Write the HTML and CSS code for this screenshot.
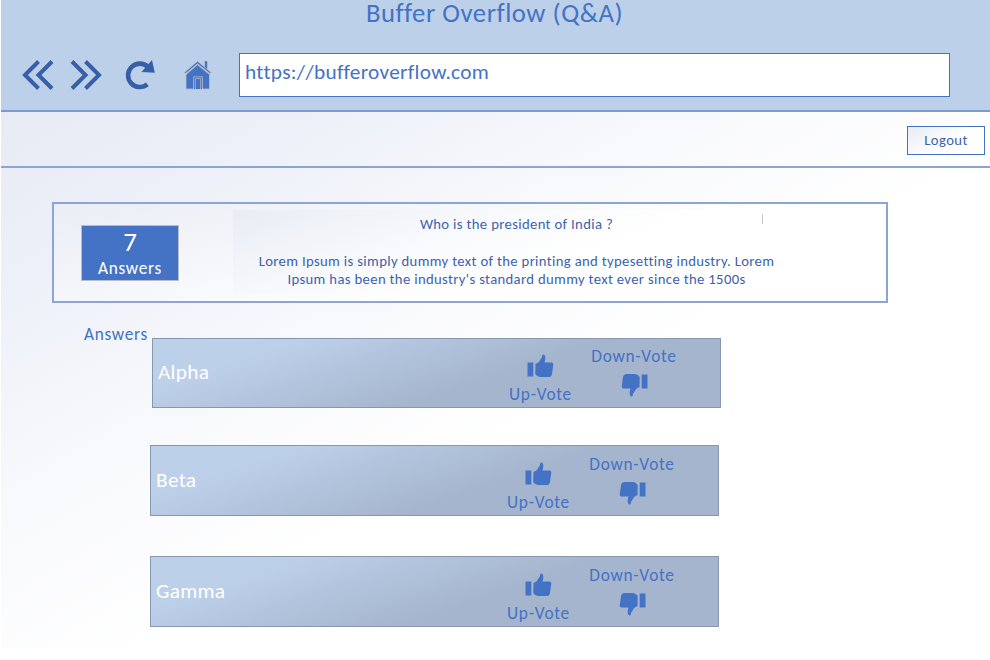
FILE: index.html
```html
<!DOCTYPE html>
<html lang="en">
<head>
<meta charset="utf-8">
<title>Buffer Overflow (Q&amp;A)</title>
<link rel="stylesheet" href="styles.css">
</head>
<body>
<svg class="defs" aria-hidden="true">
  <symbol id="thumb" viewBox="0 0 27 24">
    <path d="M0.5 8.500h5.800v14h-5.800zM8.500 9.800q3.500-.8 5-4.500Q15 4 15.200 1.800Q15.400.5 16.600.6Q18.500 1 18.300 4.500L17.600 8.500h7.200q1.800.3 1.500 2.200l-1.300 9q-.4 3.300-3.500 3.400h-8q-2.500 0-4.500-2Q8.300 20.500 8.300 19z"/>
  </symbol>
</svg>
<div class="window">
  <header class="browser">
    <h1 class="title">Buffer Overflow (Q&amp;A)</h1>
    <div class="toolbar">
      <svg class="chev back" viewBox="0 0 32 30"><path d="M16.500 1.500L3 15l13.500 13.500M30 1.500L16.500 15L30 28.500"/></svg>
      <svg class="chev forward" viewBox="0 0 32 30"><path d="M2 1.500L15.500 15L2 28.500M15.500 1.500L29 15L15.500 28.500"/></svg>
      <svg class="reload" viewBox="0 0 30 30"><path class="arc" d="M22.300 24.300A11.700 11.700 0 1 1 23 7"/><path class="tip" d="M27 0L29.800 12.800L16.500 12z"/></svg>
      <svg class="home" viewBox="0 0 30 30"><path d="M21.500 9V1h3v10M3 14.500L14.500 4.800L26.500 14.500V29H3z"/><path d="M1 12.800L14.500 1.200L28.500 12.800L26.500 13.200L14.500 3.800L3 13.200z"/><path d="M10.500 29V16.800h9V29M12.300 29V18.600h5.400V29"/></svg>
      <div class="address">https://bufferoverflow.com</div>
    </div>
  </header>
  <div class="page">
    <nav class="account"><button class="logout">Logout</button></nav>
    <main>
      <section class="question">
        <div class="count"><b>7</b><span>Answers</span></div>
        <div class="body">
          <p class="q">Who is the president of India ?</p>
          <p>Lorem Ipsum is simply dummy text of the printing and typesetting industry. Lorem</p>
          <p>Ipsum has been the industry's standard dummy text ever since the 1500s</p>
        </div>
        <i class="caret"></i>
      </section>
      <section class="answers">
        <h2>Answers</h2>
        <div class="list">
          <article class="answer first"><span class="name">Alpha</span>
            <div class="vote up"><svg class="thumb"><use href="#thumb"/></svg><span>Up-Vote</span></div>
            <div class="vote down"><span>Down-Vote</span><svg class="thumb"><use href="#thumb"/></svg></div></article>
          <article class="answer"><span class="name">Beta</span>
            <div class="vote up"><svg class="thumb"><use href="#thumb"/></svg><span>Up-Vote</span></div>
            <div class="vote down"><span>Down-Vote</span><svg class="thumb"><use href="#thumb"/></svg></div></article>
          <article class="answer last"><span class="name">Gamma</span>
            <div class="vote up"><svg class="thumb"><use href="#thumb"/></svg><span>Up-Vote</span></div>
            <div class="vote down"><span>Down-Vote</span><svg class="thumb"><use href="#thumb"/></svg></div></article>
        </div>
      </section>
    </main>
  </div>
</div>
</body>
</html>
```
FILE: styles.css
```css
* { box-sizing: border-box; }
body { margin: 0; background: #fff; font-family: Carlito, Lato, sans-serif; font-variant-ligatures: none; color: #4472c4; }
h1, h2, p { margin: 0; font-weight: 400; white-space: nowrap; }
.defs { display: none; }
.window { height: 660px; padding-left: 1px; }
.browser { height: 112px; background: #bdd0e9; border-bottom: 2px solid #7b9ad0; }
.title { height: 53px; padding-left: 365px; font-size: 26.700px; line-height: 27px; letter-spacing: 0.54px; }
.toolbar { display: flex; height: 44px; }
.toolbar svg { flex: none; }
.chev { width: 32px; height: 30px; margin-top: 7px; fill: none; stroke: #375fa8; stroke-width: 4; }
.back { margin-left: 21px; }
.forward { margin-left: 16px; }
.reload { width: 30px; height: 30px; margin: 7px 0 0 23px; }
.arc { fill: none; stroke: #375fa8; stroke-width: 4.6; }
.tip { fill: #375fa8; }
.home { width: 30px; height: 30px; margin: 7px 0 0 28px; fill: #4472c4; stroke: #bcbcc0; stroke-width: .8; }
.address { width: 711px; height: 44px; margin-left: 26px; border: 1px solid #4472c4; background: #fff; padding-left: 5px; font-size: 21.300px; letter-spacing: .3px; line-height: 36px; white-space: nowrap; }
.page { height: 536px; background: linear-gradient(150deg, #e8eaf4 0%, #eef0f9 16%, #f8f9fc 36%, #fff 56%); }
.account { height: 56px; display: flex; justify-content: flex-end; padding: 14px 5px 0 0; border-bottom: 2px solid #8ba5d6; }
.logout { width: 78px; height: 29px; padding: 0 0 2px; border: 1px solid #4472c4; background: linear-gradient(150deg, #e9ebf4, #fff 55%); color: #3c62ad; font: 14.700px/24px Carlito, Lato, sans-serif; letter-spacing: .4px; }
.question { display: flex; width: 836px; height: 101px; margin: 34px 0 0 51px; border: 2px solid #8ba5d6; background: linear-gradient(165deg, #ebedf6, #f8f9fc 40%, #fff 62%); position: relative; }
.count { width: 98px; height: 56px; margin: 21px 0 0 27px; border: 1px solid #b9bcc5; background: #4472c4; color: #fff; text-align: center; display: flex; flex-direction: column; }
.count b { font-size: 27px; line-height: 31px; font-weight: 400; }
.count span { font-size: 17.300px; line-height: 24px; letter-spacing: .7px; }
.body { width: 567px; height: 84px; margin: 6px 0 0 54px; background: linear-gradient(160deg, #e9ecf5, #f9fafd 35%, #fff 60%); color: #3c62ad; font-size: 14.700px; letter-spacing: .34px; text-align: center; line-height: 18.700px; padding-top: 5px; }
.q { margin-bottom: 18px; }
.caret { position: absolute; left: 708px; top: 10px; width: 1px; height: 10px; background: #c6c6c6; }
.answers { display: flex; padding-left: 83px; height: 345px; }
h2 { width: 69px; font-size: 17.300px; letter-spacing: .7px; line-height: 20px; margin-top: 22px; }
.list { padding-top: 35px; display: flex; flex-direction: column; margin-left: -3px; }
.answer { display: flex; width: 569px; height: 71px; margin-bottom: 40px; padding-top: 1px; border: 1px solid #8797b1; background: linear-gradient(161deg, #bdd0e9 19%, #b9cbe5 26%, #a5b5cd 59%); }
.first { height: 70px; margin: 0 0 37px 2px; padding-top: 0; }
.last { margin: 0; }
.name { width: 351px; margin-left: 5px; color: #fff; font-size: 21.300px; letter-spacing: .3px; line-height: 67px; }
.vote { display: flex; flex-direction: column; white-space: nowrap; font-size: 17.300px; letter-spacing: .72px; line-height: 20px; align-items: center; }
.up { width: 63px; padding-top: 15px; }
.down { width: 88px; margin-left: 18px; padding-top: 8px; }
.thumb { width: 27px; height: 24px; fill: #4472c4; }
.up span { margin-top: 7px; }
.down .thumb { transform: rotate(180deg); margin-top: 6px; }
```
